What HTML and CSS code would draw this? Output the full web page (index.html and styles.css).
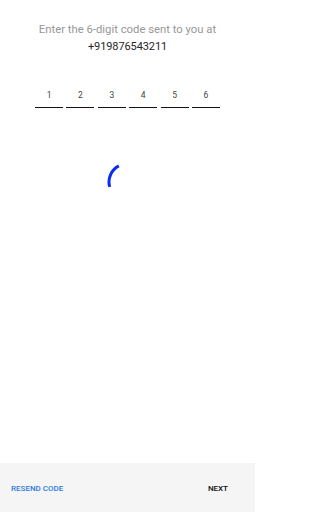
FILE: index.html
```html
<!DOCTYPE html>
<html>
<head>
<meta charset="utf-8">
<link rel="stylesheet" href="styles.css">
</head>
<body>
<div class="screen">
  <main class="content">
    <p class="prompt">Enter the 6-digit code sent to you at<br><span class="phone">+919876543211</span></p>
    <div class="code-row">
      <div class="digit">1</div>
      <div class="digit">2</div>
      <div class="digit">3</div>
      <div class="digit">4</div>
      <div class="digit">5</div>
      <div class="digit">6</div>
    </div>
    <div class="spinner-wrap">
      <svg class="spinner" width="40" height="40" viewBox="0 0 40 40">
        <path d="M2.7 24.96 A18 18 0 0 1 11.83 3.96" fill="none" stroke="#0a2cf2" stroke-width="3"/>
      </svg>
    </div>
  </main>
  <footer class="bar">
    <span class="btn resend">RESEND CODE</span>
    <span class="btn next">NEXT</span>
  </footer>
</div>
</body>
</html>
```
FILE: styles.css
```css
html, body {
  margin: 0;
  padding: 0;
  background: #ffffff;
}
.screen {
  width: 255px;
  height: 512px;
  display: flex;
  flex-direction: column;
  font-family: Roboto, "Noto Sans", sans-serif;
}
.content {
  flex: 1;
  display: flex;
  flex-direction: column;
  align-items: center;
  padding-top: 21px;
}
.prompt {
  margin: 0;
  text-align: center;
  font-size: 11.3px;
  line-height: 17px;
  color: #979797;
}
.phone {
  color: #262626;
  font-size: 11px;
  letter-spacing: -0.1px;
}
.code-row {
  display: flex;
  gap: 3.4px;
  margin-top: 34px;
}
.digit {
  width: 28px;
  text-align: center;
  font-size: 8.5px;
  line-height: 12px;
  color: #444444;
  padding-bottom: 6px;
  border-bottom: 1px solid #111111;
}
.spinner-wrap {
  width: 40px;
  margin-top: 54px;
  align-self: flex-start;
  margin-left: 107px;
}
.spinner {
  display: block;
}
.bar {
  height: 49px;
  box-sizing: border-box;
  background: #f5f5f5;
  display: flex;
  align-items: center;
  justify-content: space-between;
  padding: 3px 27px 0 11px;
}
.btn {
  font-size: 8px;
  font-weight: 500;
  line-height: 10px;
}
.resend {
  color: #2b7be0;
}
.next {
  color: #111111;
}
```
